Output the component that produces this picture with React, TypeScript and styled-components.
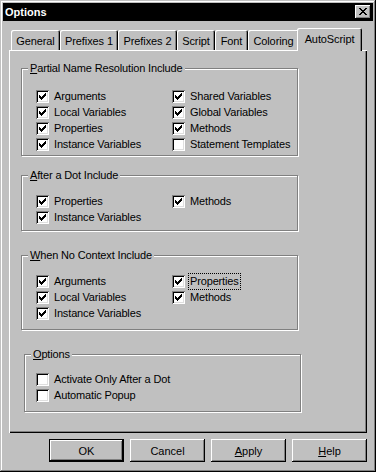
import React from 'react';
import styled, {createGlobalStyle} from 'styled-components';

const GlobalStyle = createGlobalStyle`
  html, body {
    margin: 0;
    padding: 0;
    background: #c0c0c0;
  }
  body {
    font-family: "Liberation Sans", Arial, sans-serif;
    font-size: 11px;
    color: #000;
  }
  * {
    box-sizing: border-box;
  }
`

type Item = {
    label: string
    checked: boolean
    focus?: boolean
}

type GroupType = {
    title: string
    key: string
    left: number
    top: number
    pt: number
    pb: number
    pl: number
    columns: number
    items: (Item | null)[]
}

const tabs = [
    {name: 'General', w: 49},
    {name: 'Prefixes 1', w: 58},
    {name: 'Prefixes 2', w: 59},
    {name: 'Script', w: 38},
    {name: 'Font', w: 33},
    {name: 'Coloring', w: 51},
    {name: 'AutoScript', w: 65, active: true},
]

const groups: GroupType[] = [
    {
        title: 'artial Name Resolution Include', key: 'P', left: 12, top: 12, pt: 15, pb: 4, pl: 14, columns: 2,
        items: [
            {label: 'Arguments', checked: true},
            {label: 'Shared Variables', checked: true},
            {label: 'Local Variables', checked: true},
            {label: 'Global Variables', checked: true},
            {label: 'Properties', checked: true},
            {label: 'Methods', checked: true},
            {label: 'Instance Variables', checked: true},
            {label: 'Statement Templates', checked: false},
        ]
    },
    {
        title: 'fter a Dot Include', key: 'A', left: 12, top: 14, pt: 13, pb: 6, pl: 14, columns: 2,
        items: [
            {label: 'Properties', checked: true},
            {label: 'Methods', checked: true},
            {label: 'Instance Variables', checked: true},
            null,
        ]
    },
    {
        title: 'hen No Context Include', key: 'W', left: 12, top: 19, pt: 13, pb: 9, pl: 14, columns: 2,
        items: [
            {label: 'Arguments', checked: true},
            {label: 'Properties', checked: true, focus: true},
            {label: 'Local Variables', checked: true},
            {label: 'Methods', checked: true},
            {label: 'Instance Variables', checked: true},
            null,
        ]
    },
    {
        title: 'ptions', key: 'O', left: 15, top: 19, pt: 12, pb: 9, pl: 11, columns: 1,
        items: [
            {label: 'Activate Only After a Dot', checked: false},
            {label: 'Automatic Popup', checked: false},
        ]
    },
]

const CloseIcon = () => (
    <svg width="8" height="7" viewBox="0 0 8 7" shapeRendering="crispEdges">
        <path fill="#000"
              d="M0 0h2v1h-2zM6 0h2v1h-2zM1 1h2v1h-2zM5 1h2v1h-2zM2 2h4v1h-4zM3 3h2v1h-2zM2 4h4v1h-4zM1 5h2v1h-2zM5 5h2v1h-2zM0 6h2v1h-2zM6 6h2v1h-2z"/>
    </svg>
)

const CheckMark = () => (
    <svg width="13" height="13" viewBox="0 0 13 13" shapeRendering="crispEdges">
        <path fill="#000"
              d="M9 3h1v1h-1zM8 4h2v1h-2zM3 5h1v1h-1zM7 5h3v1h-3zM3 6h2v1h-2zM6 6h3v1h-3zM3 7h5v1h-5zM4 8h3v1h-3zM5 9h1v1h-1z"/>
    </svg>
)

const CheckRow = (props: { item: Item }) => {
    return (
        <Row>
            <Box>{props.item.checked && <CheckMark/>}</Box>
            <Text $focus={props.item.focus}>{props.item.label}</Text>
        </Row>
    )
}

const App = () => {
    return (
        <>
            <GlobalStyle/>
            <Window>
                <TitleBar>
                    <Title>Options</Title>
                    <CloseButton><CloseIcon/></CloseButton>
                </TitleBar>
                <Body>
                    <TabStrip>
                        {tabs.map(t => (
                            <Tab key={t.name} $w={t.w} $active={t.active}>{t.name}</Tab>
                        ))}
                    </TabStrip>
                    <Panel>
                        {groups.map(g => (
                            <Group key={g.title} $left={g.left} $top={g.top}>
                                <Legend><u>{g.key}</u>{g.title}</Legend>
                                <GroupBody $pt={g.pt} $pb={g.pb} $pl={g.pl} $columns={g.columns}>
                                    {g.items.map((item, i) =>
                                        item ? <CheckRow key={i} item={item}/> : <span key={i}/>
                                    )}
                                </GroupBody>
                            </Group>
                        ))}
                    </Panel>
                    <ButtonRow>
                        <Button $default>OK</Button>
                        <Button>Cancel</Button>
                        <Button><u>A</u>pply</Button>
                        <Button><u>H</u>elp</Button>
                    </ButtonRow>
                </Body>
            </Window>
        </>
    )
}

export default App

const Window = styled.div`
  width: 376px;
  height: 472px;
  padding: 3px;
  background: #c0c0c0;
  box-shadow: inset -1px -1px #000, inset 1px 1px #c0c0c0, inset -2px -2px #808080, inset 2px 2px #fff;
  display: flex;
  flex-direction: column;
`

const TitleBar = styled.div`
  height: 18px;
  background: #000;
  display: flex;
  align-items: center;
  justify-content: space-between;
  padding: 0 2px 0 2px;
`

const Title = styled.div`
  color: #fff;
  font-weight: bold;
  font-size: 11px;
  line-height: 13px;
`

const CloseButton = styled.div`
  width: 16px;
  height: 14px;
  background: #c0c0c0;
  box-shadow: inset -1px -1px #000, inset 1px 1px #fff, inset -2px -2px #808080;
  display: flex;
  align-items: center;
  justify-content: center;
  padding: 0 1px 1px 0;
`

const Body = styled.div`
  display: flex;
  flex-direction: column;
  padding: 0 6px;
`

const TabStrip = styled.div`
  height: 29px;
  display: flex;
  align-items: flex-end;
  padding-left: 2px;
`

const Tab = styled.div<{ $w: number, $active?: boolean }>`
  position: relative;
  z-index: ${props => props.$active ? 2 : 1};
  width: ${props => props.$w}px;
  height: ${props => props.$active ? 23 : 20}px;
  margin-left: ${props => props.$active ? -2 : 0}px;
  margin-bottom: ${props => props.$active ? -1 : 0}px;
  padding-top: ${props => props.$active ? 0 : 2}px;
  background: #c0c0c0;
  border-radius: 2px 2px 0 0;
  box-shadow: inset 1px 1px #fff, inset -1px 0 #000, inset -2px 0 #808080;
  display: flex;
  align-items: center;
  justify-content: center;
  white-space: nowrap;
  line-height: 13px;
  letter-spacing: -0.1px;
`

const Panel = styled.div`
  height: 383px;
  background: #c0c0c0;
  box-shadow: inset 1px 1px #fff, inset -1px -1px #000, inset -2px -2px #808080;
  display: flex;
  flex-direction: column;
  align-items: flex-start;
  padding-top: 1px;
`

const Group = styled.fieldset<{ $left: number, $top: number }>`
  width: 277px;
  margin: ${props => props.$top - 1}px 0 0 ${props => props.$left}px;
  padding: 0;
  border: 1px solid #808080;
  box-shadow: 1px 1px 0 #fff, inset 1px 1px 0 #fff;
  min-inline-size: 0;
`

const Legend = styled.legend`
  margin-left: 6px;
  padding: 0 2px;
  line-height: 13px;
  font-size: 11px;
  letter-spacing: -0.15px;
  background: #c0c0c0;
`

const GroupBody = styled.div<{ $pt: number, $pb: number, $pl: number, $columns: number }>`
  display: grid;
  grid-template-columns: ${props => props.$columns === 2 ? '136px 1fr' : '1fr'};
  grid-auto-rows: 13px;
  row-gap: 3px;
  padding: ${props => props.$pt}px 0 ${props => props.$pb}px ${props => props.$pl}px;
`

const Row = styled.div`
  display: flex;
  align-items: center;
  gap: 5px;
  height: 13px;
`

const Box = styled.div`
  width: 13px;
  height: 13px;
  flex: none;
  background: #fff;
  box-shadow: inset 1px 1px #808080, inset -1px -1px #fff, inset 2px 2px #000, inset -2px -2px #dfdfdf;
`

const Text = styled.span<{ $focus?: boolean }>`
  line-height: 13px;
  white-space: nowrap;
  letter-spacing: -0.15px;
  outline: ${props => props.$focus ? '1px dotted #000' : 'none'};
  outline-offset: 1px;
`

const ButtonRow = styled.div`
  display: flex;
  justify-content: flex-end;
  gap: 6px;
  margin-top: 6px;
`

const Button = styled.button<{ $default?: boolean }>`
  width: 75px;
  height: 23px;
  padding: 0;
  border: none;
  background: #c0c0c0;
  color: #000;
  font-family: "Liberation Sans", Arial, sans-serif;
  font-size: 11px;
  box-shadow: ${props => props.$default
    ? 'inset 0 0 0 1px #000, inset -2px -2px #000, inset 2px 2px #fff, inset -3px -3px #808080'
    : 'inset -1px -1px #000, inset 1px 1px #fff, inset -2px -2px #808080'};
`
